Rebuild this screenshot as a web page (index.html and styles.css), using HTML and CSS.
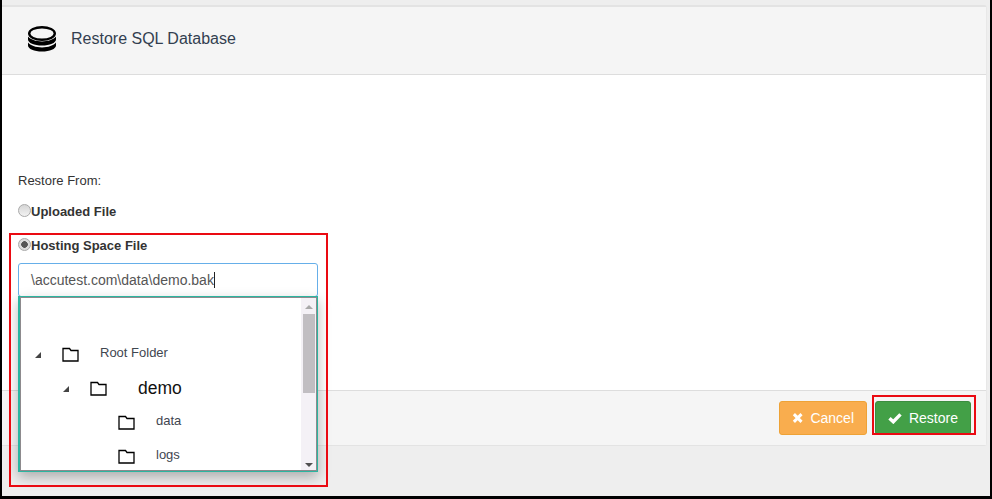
FILE: index.html
```html
<!DOCTYPE html>
<html lang="en">
<head>
<meta charset="utf-8">
<title>Restore SQL Database</title>
<link rel="stylesheet" href="styles.css">
</head>
<body>
<div class="frame">
  <section class="panel">
    <header class="panel-head">
      <svg class="db-icon" width="30" height="26" viewBox="0 0 30 26" aria-hidden="true">
        <ellipse cx="15" cy="7.500" rx="12.800" ry="6.300" fill="none" stroke="#000" stroke-width="2.400"/>
        <path d="M1 10.500v3c0 3.400 6.200 6 14 6s14-2.600 14-6v-3c-2 3-8 4.900-14 4.900S3 13.500 1 10.500z" fill="#000"/>
        <path d="M1 16.500v3c0 3.400 6.200 6 14 6s14-2.600 14-6v-3c-2 3-8 4.900-14 4.900S3 19.500 1 16.500z" fill="#000"/>
      </svg>
      <h1 class="panel-title">Restore SQL Database</h1>
    </header>
    <div class="panel-body">
      <p class="from-label">Restore From:</p>
      <label class="radio-row"><span class="radio"></span>Uploaded File</label>
      <label class="radio-row radio-row-second"><span class="radio radio-on"></span>Hosting Space File</label>
      <div class="path-input">\accutest.com\data\demo.bak<span class="caret"></span></div>
      <div class="tree">
        <ul class="tree-list">
          <li class="node node-root">
            <span class="arrow"></span>
            <svg class="folder" width="17" height="15" viewBox="0 0 17 15" aria-hidden="true"><path d="M1 14V1.500h6.500L9 3.500h7V14z" fill="#fff" stroke="#000" stroke-width="1.300"/></svg>
            <span class="node-label">Root Folder</span>
          </li>
          <li class="node node-demo">
            <span class="arrow"></span>
            <svg class="folder" width="17" height="15" viewBox="0 0 17 15" aria-hidden="true"><path d="M1 14V1.500h6.500L9 3.500h7V14z" fill="#fff" stroke="#000" stroke-width="1.300"/></svg>
            <span class="node-label node-label-big">demo</span>
          </li>
          <li class="node node-leaf">
            <svg class="folder" width="17" height="15" viewBox="0 0 17 15" aria-hidden="true"><path d="M1 14V1.500h6.500L9 3.500h7V14z" fill="#fff" stroke="#000" stroke-width="1.300"/></svg>
            <span class="node-label">data</span>
          </li>
          <li class="node node-leaf">
            <svg class="folder" width="17" height="15" viewBox="0 0 17 15" aria-hidden="true"><path d="M1 14V1.500h6.500L9 3.500h7V14z" fill="#fff" stroke="#000" stroke-width="1.300"/></svg>
            <span class="node-label">logs</span>
          </li>
        </ul>
        <div class="scrollbar">
          <span class="scroll-up"></span>
          <span class="scroll-thumb"></span>
          <span class="scroll-down"></span>
        </div>
      </div>
      <div class="mark mark-tree"></div>
    </div>
    <footer class="panel-foot">
      <button class="btn btn-cancel" type="button">
        <svg class="btn-icon" width="12" height="12" viewBox="0 0 12 12" aria-hidden="true"><path d="M2 2l8 8M10 2l-8 8" stroke="#fff" stroke-width="3.200" fill="none"/></svg>
        Cancel
      </button>
      <button class="btn btn-restore" type="button">
        <svg class="btn-icon" width="14" height="12" viewBox="0 0 14 12" aria-hidden="true"><path d="M1.500 6.200l3.800 3.600L12.500 2.300" stroke="#fff" stroke-width="3.400" fill="none"/></svg>
        Restore
      </button>
      <div class="mark mark-restore"></div>
    </footer>
  </section>
</div>
</body>
</html>
```
FILE: styles.css
```css
html, body {
  margin: 0;
  height: 100%;
}
body {
  font-family: "Liberation Sans", Arial, sans-serif;
  background: #000;
  overflow: hidden;
}
.frame {
  box-sizing: border-box;
  height: 496px;
  margin: 0 2px 3px 2px;
  padding: 5px 3px 0 0;
  background: #eeeeee;
}
.panel {
  background: #fff;
  border-top: 2px solid #e3e3e3;
  border-bottom: 1px solid #e3e3e3;
  border-right: 1px solid #e8e8e8;
  border-radius: 0 3px 3px 0;
  position: relative;
}
.panel-head {
  box-sizing: border-box;
  height: 68px;
  display: flex;
  align-items: center;
  padding: 0 0 0 25px;
  background: #f5f5f5;
  border-bottom: 1px solid #dddddd;
}
.db-icon {
  margin-right: 14px;
  position: relative;
  top: -2px;
}
.panel-title {
  margin: 0;
  font-size: 16px;
  font-weight: 400;
  color: #333f50;
  position: relative;
  top: -2px;
}
.panel-body {
  box-sizing: border-box;
  height: 315px;
  padding: 98px 0 0 16px;
  position: relative;
  font-size: 13px;
  color: #333;
}
.from-label {
  margin: 0;
  line-height: 15px;
}
.radio-row {
  display: flex;
  align-items: flex-start;
  margin-top: 16px;
  font-weight: 700;
  line-height: 15px;
}
.radio-row-second {
  margin-top: 19px;
}
.radio {
  box-sizing: border-box;
  width: 13px;
  height: 13px;
  border-radius: 50%;
  border: 1px solid #a9a9a9;
  background: linear-gradient(#d6d6d6, #f2f2f2);
}
.radio-on {
  background: radial-gradient(circle, #555 0 3px, #dcdcdc 3.600px);
}
.path-input {
  box-sizing: border-box;
  width: 300px;
  height: 34px;
  margin-top: 10px;
  padding: 0 0 0 12px;
  border: 1px solid #66afe9;
  border-radius: 3px;
  font-size: 14px;
  color: #555;
  display: flex;
  align-items: center;
}
.caret {
  display: inline-block;
  width: 1px;
  height: 16px;
  background: #222;
}
.tree {
  position: absolute;
  left: 16px;
  top: 221px;
  box-sizing: border-box;
  width: 300px;
  height: 176px;
  display: flex;
  background: #fff;
  border: 1px solid #2bb5a0;
  border-left-width: 2px;
  box-shadow: 0 5px 12px rgba(0, 0, 0, 0.28);
  z-index: 2;
}
.tree::after {
  content: "";
  position: absolute;
  inset: 0;
  border: 1px solid #8d8a8d;
  pointer-events: none;
}
.tree-list {
  flex: 1;
  margin: 0;
  padding: 39px 0 0 0;
  list-style: none;
}
.node {
  display: flex;
  align-items: center;
  height: 34px;
  position: relative;
  font-size: 13px;
  color: #3f4650;
}
.node-root { padding-left: 15px; }
.node-demo { padding-left: 43px; }
.node-leaf { padding-left: 98px; }
.arrow {
  width: 0;
  height: 0;
  margin-right: 21px;
  border-style: solid;
  border-width: 0 0 6px 6px;
  border-color: transparent transparent #444 transparent;
  position: relative;
  top: 2px;
}
.folder { flex: none; position: relative; top: 1px; }
.node-label { margin-left: 21px; position: relative; top: -1px; }
.node-label-big {
  margin-left: 31px;
  font-size: 17.500px;
  color: #111;
  top: 1px;
}
.scrollbar {
  width: 16px;
  height: 100%;
  background: #f4f1f6;
  flex: none;
  position: relative;
}
.scroll-up, .scroll-down {
  position: absolute;
  left: 4px;
  width: 0;
  height: 0;
  border-left: 4px solid transparent;
  border-right: 4px solid transparent;
}
.scroll-up {
  top: 8px;
  border-bottom: 4px solid #a8a8a8;
}
.scroll-down {
  bottom: 4px;
  border-top: 4px solid #505050;
}
.scroll-thumb {
  position: absolute;
  left: 2px;
  top: 17px;
  width: 12px;
  height: 79px;
  background: #c1bec2;
}
.mark {
  position: absolute;
  box-sizing: border-box;
  border: 2px solid #ea0a12;
  pointer-events: none;
  z-index: 3;
}
.mark-tree {
  left: 7px;
  top: 158px;
  width: 319px;
  height: 254px;
}
.panel-foot {
  box-sizing: border-box;
  height: 55px;
  display: flex;
  justify-content: flex-end;
  align-items: flex-start;
  gap: 8px;
  padding: 10px 15px 0 0;
  background: #f5f5f5;
  border-top: 1px solid #dddddd;
  position: relative;
}
.btn {
  box-sizing: border-box;
  height: 34px;
  display: flex;
  align-items: center;
  gap: 7px;
  border-radius: 3px;
  font-family: inherit;
  font-size: 14px;
  color: #fff;
  padding: 0 12px;
}
.btn-cancel {
  width: 88px;
  background: #f9ad4e;
  border: 1px solid #eea236;
}
.btn-restore {
  width: 96px;
  padding-left: 12px;
  background: #43a047;
  border: 1px solid #3b8d3f;
}
.mark-restore {
  right: 10px;
  top: 4px;
  width: 104px;
  height: 40px;
}
```
